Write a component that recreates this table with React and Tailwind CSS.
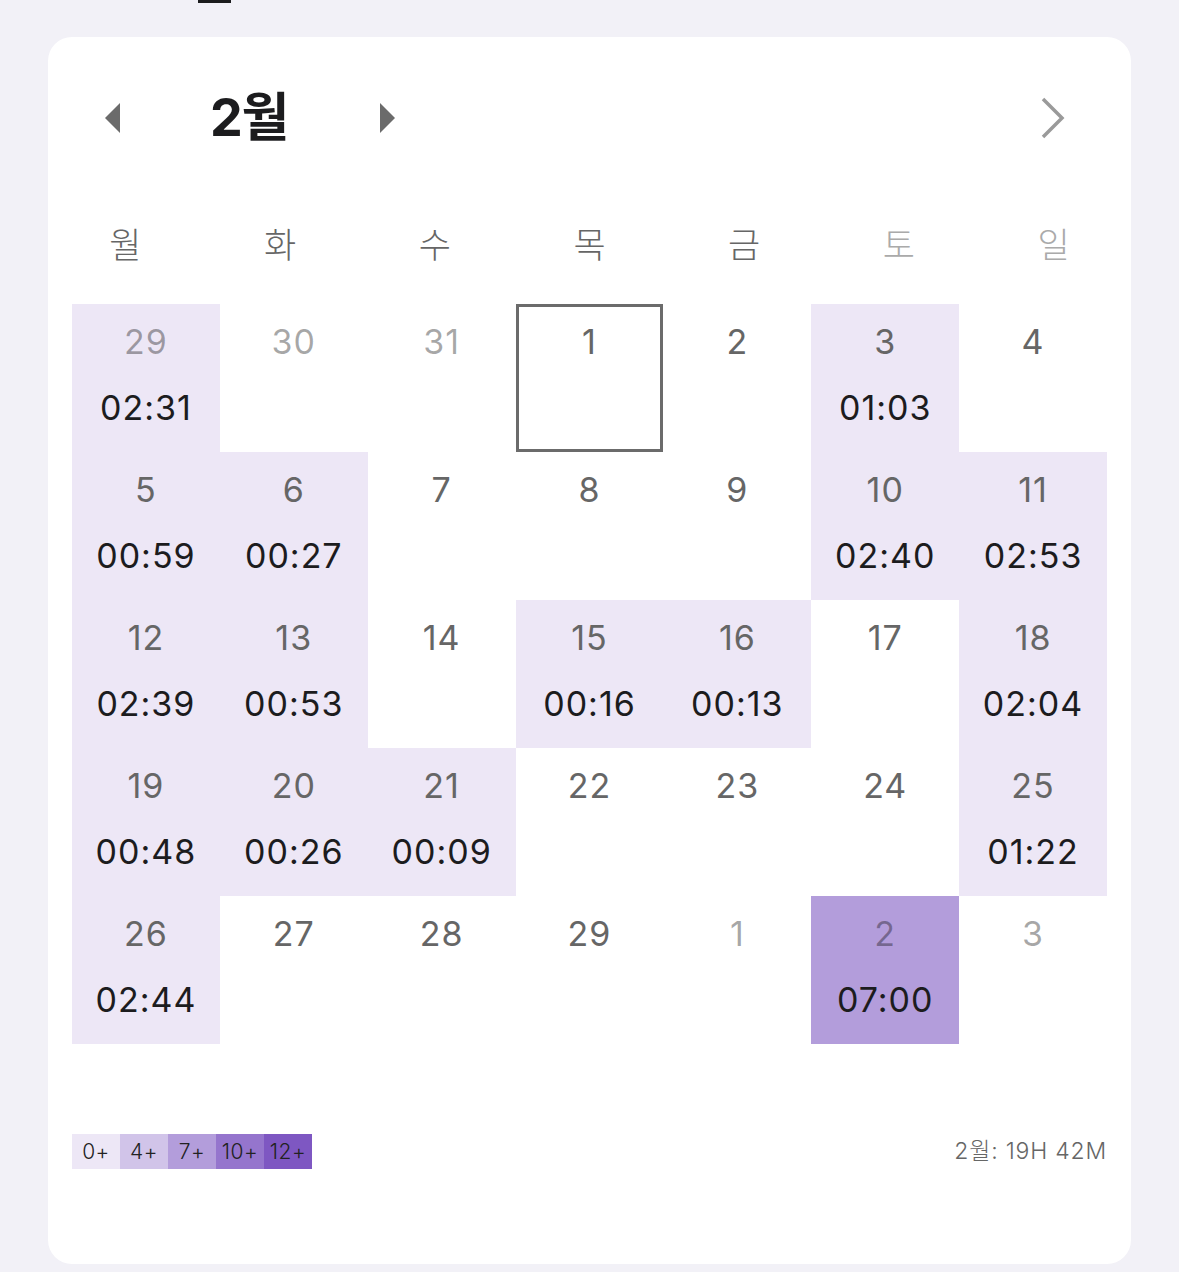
import React from "react";

const FONT = { fontFamily: '"Inter", "Noto Sans CJK KR", sans-serif' };

// level 0 = none, 1 = light, 2 = 7+
const cells = [
  { d: 29, out: true, t: "02:31", lv: 1 },
  { d: 30, out: true },
  { d: 31, out: true },
  { d: 1, today: true },
  { d: 2 },
  { d: 3, t: "01:03", lv: 1 },
  { d: 4 },
  { d: 5, t: "00:59", lv: 1 },
  { d: 6, t: "00:27", lv: 1 },
  { d: 7 },
  { d: 8 },
  { d: 9 },
  { d: 10, t: "02:40", lv: 1 },
  { d: 11, t: "02:53", lv: 1 },
  { d: 12, t: "02:39", lv: 1 },
  { d: 13, t: "00:53", lv: 1 },
  { d: 14 },
  { d: 15, t: "00:16", lv: 1 },
  { d: 16, t: "00:13", lv: 1 },
  { d: 17 },
  { d: 18, t: "02:04", lv: 1 },
  { d: 19, t: "00:48", lv: 1 },
  { d: 20, t: "00:26", lv: 1 },
  { d: 21, t: "00:09", lv: 1 },
  { d: 22 },
  { d: 23 },
  { d: 24 },
  { d: 25, t: "01:22", lv: 1 },
  { d: 26, t: "02:44", lv: 1 },
  { d: 27 },
  { d: 28 },
  { d: 29 },
  { d: 1, out: true },
  { d: 2, out: true, t: "07:00", lv: 2 },
  { d: 3, out: true },
];

const weekdays = [
  { k: "월" },
  { k: "화" },
  { k: "수" },
  { k: "목" },
  { k: "금" },
  { k: "토", light: true },
  { k: "일", light: true },
];

const legend = [
  { label: "0+", bg: "bg-[#ede7f6]" },
  { label: "4+", bg: "bg-[#d1c4e9]" },
  { label: "7+", bg: "bg-[#b39ddb]" },
  { label: "10+", bg: "bg-[#9575cd]" },
  { label: "12+", bg: "bg-[#7e57c2]" },
];

const DayCell = ({ cell }) => {
  const bg =
    cell.lv === 2 ? "bg-[#b39ddb]" : cell.lv === 1 ? "bg-[#ede7f6]" : "bg-white";
  return (
    <div
      className={`h-[148px] flex flex-col items-center ${bg} ${
        cell.today ? "border-[3px] border-[#6b6b6b] pt-[15px]" : "pt-[18px]"
      }`}
    >
      <span
        className={`text-[34px] leading-[40px] tracking-[1px] ${
          cell.out ? "text-black/35" : "text-[#666]"
        }`}
      >
        {cell.d}
      </span>
      {cell.t && (
        <span className="mt-[26px] text-[34px] leading-[40px] tracking-[1px] text-[#1c1c1e]">
          {cell.t}
        </span>
      )}
    </div>
  );
};

export default function App() {
  return (
    <div className="min-h-[1272px] bg-[#f2f1f7]" style={FONT}>
      {/* tab underline peeking from above */}
      <div className="ml-[198px] w-[33px] h-[3px] bg-[#1c1c1e]" />

      <div className="mx-[48px] mt-[34px] bg-white rounded-[24px] px-[24px] pt-[41px] pb-[95px]">
        {/* Month header */}
        <div className="h-[80px] flex items-center">
          <button className="ml-[33px] w-[15px] h-[30px] flex items-center">
            <svg width="15" height="30" viewBox="0 0 15 30">
              <path d="M15 0 L0 15 L15 30 Z" fill="#6b6b6b" />
            </svg>
          </button>
          <h2 className="ml-[90px] text-[52px] font-bold text-[#1c1c1e] leading-none tracking-tight">
            2월
          </h2>
          <button className="ml-[92px] w-[15px] h-[30px] flex items-center">
            <svg width="15" height="30" viewBox="0 0 15 30">
              <path d="M0 0 L15 15 L0 30 Z" fill="#6b6b6b" />
            </svg>
          </button>
          <button className="ml-auto mr-[41px]">
            <svg width="26" height="42" viewBox="0 0 26 42">
              <path
                d="M3 2 L22 21 L3 40"
                fill="none"
                stroke="#9a9a9a"
                strokeWidth="3.5"
              />
            </svg>
          </button>
        </div>

        {/* Weekdays span the full card width */}
        <div className="-mx-[24px] grid grid-cols-7 h-[146px] pt-[28px] items-center">
          {weekdays.map((w) => (
            <div
              key={w.k}
              className={`text-center text-[35px] font-light leading-none ${
                w.light ? "text-[#aaa]" : "text-[#666]"
              }`}
            >
              {w.k}
            </div>
          ))}
        </div>

        {/* Days grid */}
        <div className="grid grid-cols-7">
          {cells.map((c, i) => (
            <DayCell key={i} cell={c} />
          ))}
        </div>

        {/* Legend + total */}
        <div className="mt-[90px] flex items-center justify-between">
          <div className="flex">
            {legend.map((l) => (
              <div
                key={l.label}
                className={`w-[48px] h-[35px] flex items-center justify-center text-[21px] font-light tracking-[0.5px] text-[#222] ${l.bg}`}
              >
                {l.label}
              </div>
            ))}
          </div>
          <span className="text-[23px] font-light tracking-[0.8px] text-[#666]">
            2월: 19H 42M
          </span>
        </div>
      </div>
    </div>
  );
}
